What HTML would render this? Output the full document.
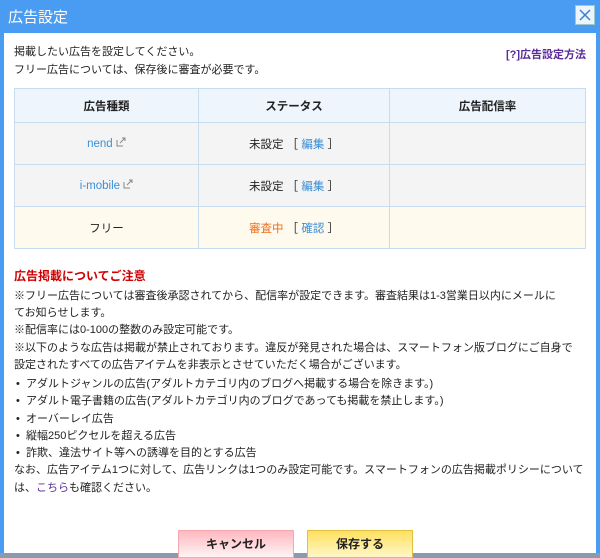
<!DOCTYPE html>
<html><head><meta charset="utf-8"><style>
*{margin:0;padding:0;box-sizing:border-box}
body{width:600px;height:556px;background:#8a9bb0;font-family:"Liberation Sans","Noto Sans CJK JP",sans-serif;font-size:11px;color:#222;position:relative;overflow:hidden}
#frame{position:absolute;left:0;top:0;width:600px;height:553px;background:#4a9cf2}
#title{position:absolute;left:8px;top:6px;color:#fff;font-size:15px}
#close{position:absolute;left:575px;top:5px;width:20px;height:20px;background:#eef4fc;border:1px solid #9cc;}
#panel{position:absolute;left:4px;top:33px;width:592px;height:520px;background:#fff}
.t{position:absolute;white-space:nowrap;line-height:16px}
a{color:#3a8fd8}
table{position:absolute;left:14px;top:88px;width:572px;border-collapse:collapse;font-size:11.5px}
td,th{border:1px solid #c8dcf0;text-align:center;height:42px}
th{background:#eef5fd;height:34px;font-weight:bold}
tr.g td{background:#f4f4f4}
tr.y td{background:#fefaee}
.btn{position:absolute;top:530px;height:28px;text-align:center;line-height:26px;font-weight:bold;font-size:12px}
</style></head><body>
<div id="frame"></div>
<div id="title">広告設定</div>
<div id="close"><svg width="18" height="18"><path d="M4 4L14 14M14 4L4 14" stroke="#3a7fd0" stroke-width="1.5"/></svg></div>
<div id="panel"></div>
<div class="t" style="left:14px;top:44px">掲載したい広告を設定してください。</div>
<div class="t" style="left:14px;top:62px">フリー広告については、保存後に審査が必要です。</div>
<div class="t" style="right:14px;top:47px;font-weight:bold"><a style="color:#5a2a9a">[?]広告設定方法</a></div>
<table>
<tr><th style="width:184px">広告種類</th><th style="width:191px">ステータス</th><th>広告配信率</th></tr>
<tr class="g"><td><a>nend</a> <svg width="10" height="10"><path d="M1 3v6h6M4 6l5-5M6 1h3v3" stroke="#888" fill="none"/></svg></td><td>未設定 ［ <a>編集</a> ］</td><td></td></tr>
<tr class="g"><td><a>i-mobile</a> <svg width="10" height="10"><path d="M1 3v6h6M4 6l5-5M6 1h3v3" stroke="#888" fill="none"/></svg></td><td>未設定 ［ <a>編集</a> ］</td><td></td></tr>
<tr class="y"><td>フリー</td><td><span style="color:#f07020">審査中</span> ［ <a>確認</a> ］</td><td></td></tr>
</table>
<div class="t" style="left:14px;top:268px;color:#d00000;font-weight:bold;font-size:12px">広告掲載についてご注意</div>
<div class="t" style="left:14px;top:288px">※フリー広告については審査後承認されてから、配信率が設定できます。審査結果は1-3営業日以内にメールに</div>
<div class="t" style="left:14px;top:305px">てお知らせします。</div>
<div class="t" style="left:14px;top:322px">※配信率には0-100の整数のみ設定可能です。</div>
<div class="t" style="left:14px;top:340px">※以下のような広告は掲載が禁止されております。違反が発見された場合は、スマートフォン版ブログにご自身で</div>
<div class="t" style="left:14px;top:357px">設定されたすべての広告アイテムを非表示とさせていただく場合がございます。</div>
<div class="t" style="left:16px;top:376px">•&nbsp;&nbsp;アダルトジャンルの広告(アダルトカテゴリ内のブログへ掲載する場合を除きます。)</div>
<div class="t" style="left:16px;top:393px">•&nbsp;&nbsp;アダルト電子書籍の広告(アダルトカテゴリ内のブログであっても掲載を禁止します。)</div>
<div class="t" style="left:16px;top:411px">•&nbsp;&nbsp;オーバーレイ広告</div>
<div class="t" style="left:16px;top:428px">•&nbsp;&nbsp;縦幅250ピクセルを超える広告</div>
<div class="t" style="left:16px;top:445px">•&nbsp;&nbsp;詐欺、違法サイト等への誘導を目的とする広告</div>
<div class="t" style="left:14px;top:462px">なお、広告アイテム1つに対して、広告リンクは1つのみ設定可能です。スマートフォンの広告掲載ポリシーについて</div>
<div class="t" style="left:14px;top:480px">は、<a style="color:#5a2a9a">こちら</a>も確認ください。</div>
<div class="btn" style="left:178px;width:116px;border:1px solid #f4a8b0;background:linear-gradient(#ffb8c0,#fff4f4)">キャンセル</div>
<div class="btn" style="left:307px;width:106px;border:1px solid #e0c040;background:linear-gradient(#ffe060,#fff6c8)">保存する</div>
</body></html>
